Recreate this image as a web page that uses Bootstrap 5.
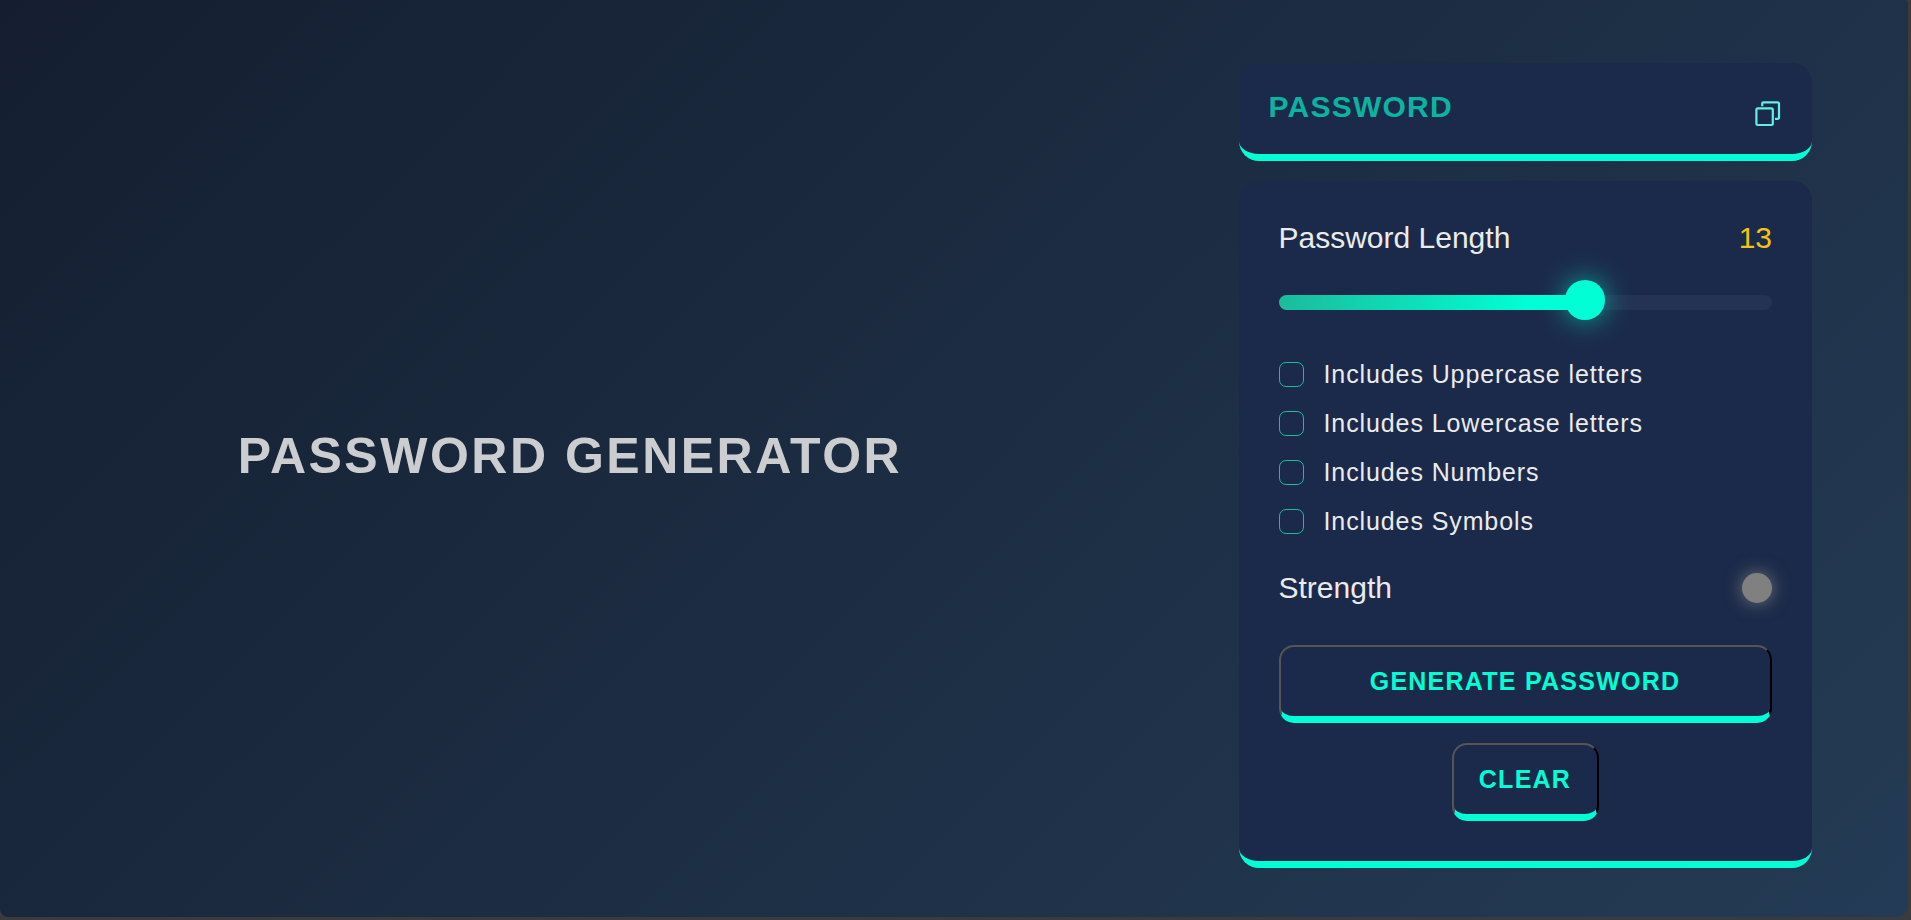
<!DOCTYPE html>
<html lang="en">
<head>
<meta charset="utf-8">
<title>Password Generator</title>
<meta name="viewport" content="width=device-width, initial-scale=1">
<link href="https://cdn.jsdelivr.net/npm/bootstrap@5.3.0/dist/css/bootstrap.min.css" rel="stylesheet">
<style>
  body { background: #3b3b3b; font-family: "Liberation Sans", Arial, sans-serif; color: #ebebeb; overflow: hidden; }
  .page { width: 1907.5px; height: 917px; padding: 63px 95.5px 0 0; background: linear-gradient(135deg, #141e30, #243b55); border-radius: 0 3px 12px 8px; }
  .hero { width: 1140px; height: 785px; }
  .hero h1 { font-size: 50px; font-weight: 700; line-height: 1.2; letter-spacing: 2.5px; color: #cccdd0; }
  .side { width: 573px; }
  .panel { background: #1b2a4a; border-bottom: 7px solid #00ffd5; border-radius: 20px; }
  .display { height: 98px; padding: 0 31.5px 0 29.5px; }
  .output { font-size: 30px; font-weight: 700; line-height: 36px; letter-spacing: 1.25px; color: #0bb3a0; margin-bottom: 3px; }
  .copy { width: 26px; height: 26px; margin-top: 10px; }
  .controls { height: 687px; padding: 39px 40px 0; }
  .line { font-size: 30px; line-height: 36px; }
  .line > span:first-child { margin-left: -.5px; }
  .count { color: #f1c40f; }
  .slider { height: 15px; margin-top: 39px; border-radius: 8px; background: #243353; }
  .fill { height: 15px; border-radius: 8px 0 0 8px; background: linear-gradient(90deg, #1abc9c, #00ffd5 82%); }
  .thumb { top: -15px; right: -20px; width: 40px; height: 40px; background: #00ffd5; box-shadow: 0 0 28px rgba(0,255,213,.6); }
  .options { margin-top: 52px; gap: 24px; }
  .option { height: 25px; gap: 19.5px; font-size: 25px; line-height: 25px; letter-spacing: .9px; }
  .option .form-check-input { width: 25px; height: 25px; margin: 0; background-color: transparent; border: 1px solid #1abc9c; border-radius: 7px; }
  .strength { margin-top: 36px; height: 36px; }
  .dot { width: 30px; height: 30px; background: #808080; box-shadow: 0 0 18px rgba(128,128,128,.9); }
  .act { height: 78px; padding: 0 26px 1px 25px; border: 2px solid; border-color: #555 #000 #00ffd5 #555; border-bottom-width: 7px; border-radius: 15px; background: transparent; color: #00ffd5; font-size: 25px; font-weight: 700; letter-spacing: 1.25px; line-height: 30px; }
</style>
</head>
<body>
<div class="page d-flex">
  <main class="hero d-flex align-items-center justify-content-center flex-shrink-0">
    <h1 class="m-0">PASSWORD GENERATOR</h1>
  </main>
  <section class="side ms-auto flex-shrink-0">
    <div class="panel display d-flex align-items-center justify-content-between">
      <div class="output">PASSWORD</div>
      <svg class="copy" viewBox="0 0 26 26" fill="none" stroke="#62f0e2" stroke-width="2.2">
        <rect x="1.4" y="7.4" width="16.4" height="16.6" rx="1.4"/>
        <path d="M7.2 5.2V2.6a1.2 1.2 0 0 1 1.2-1.2H22.8a1.2 1.2 0 0 1 1.2 1.2V16.6a1.2 1.2 0 0 1-1.2 1.2H20"/>
      </svg>
    </div>
    <div class="panel controls" style="margin-top:20px">
      <div class="line d-flex justify-content-between"><span>Password Length</span><span class="count">13</span></div>
      <div class="slider">
        <div class="fill position-relative" style="width:62%"><div class="thumb position-absolute rounded-circle"></div></div>
      </div>
      <div class="options d-flex flex-column">
        <label class="option d-flex align-items-center"><input type="checkbox" class="form-check-input"><span>Includes Uppercase letters</span></label>
        <label class="option d-flex align-items-center"><input type="checkbox" class="form-check-input"><span>Includes Lowercase letters</span></label>
        <label class="option d-flex align-items-center"><input type="checkbox" class="form-check-input"><span>Includes Numbers</span></label>
        <label class="option d-flex align-items-center"><input type="checkbox" class="form-check-input"><span>Includes Symbols</span></label>
      </div>
      <div class="strength line d-flex align-items-center justify-content-between"><span>Strength</span><span class="dot rounded-circle"></span></div>
      <button class="act d-block w-100" style="margin-top:39px">GENERATE PASSWORD</button>
      <button class="act d-block mx-auto" style="margin-top:20px">CLEAR</button>
    </div>
  </section>
</div>
<script src="https://cdn.jsdelivr.net/npm/bootstrap@5.3.0/dist/js/bootstrap.bundle.min.js"></script>
</body>
</html>
